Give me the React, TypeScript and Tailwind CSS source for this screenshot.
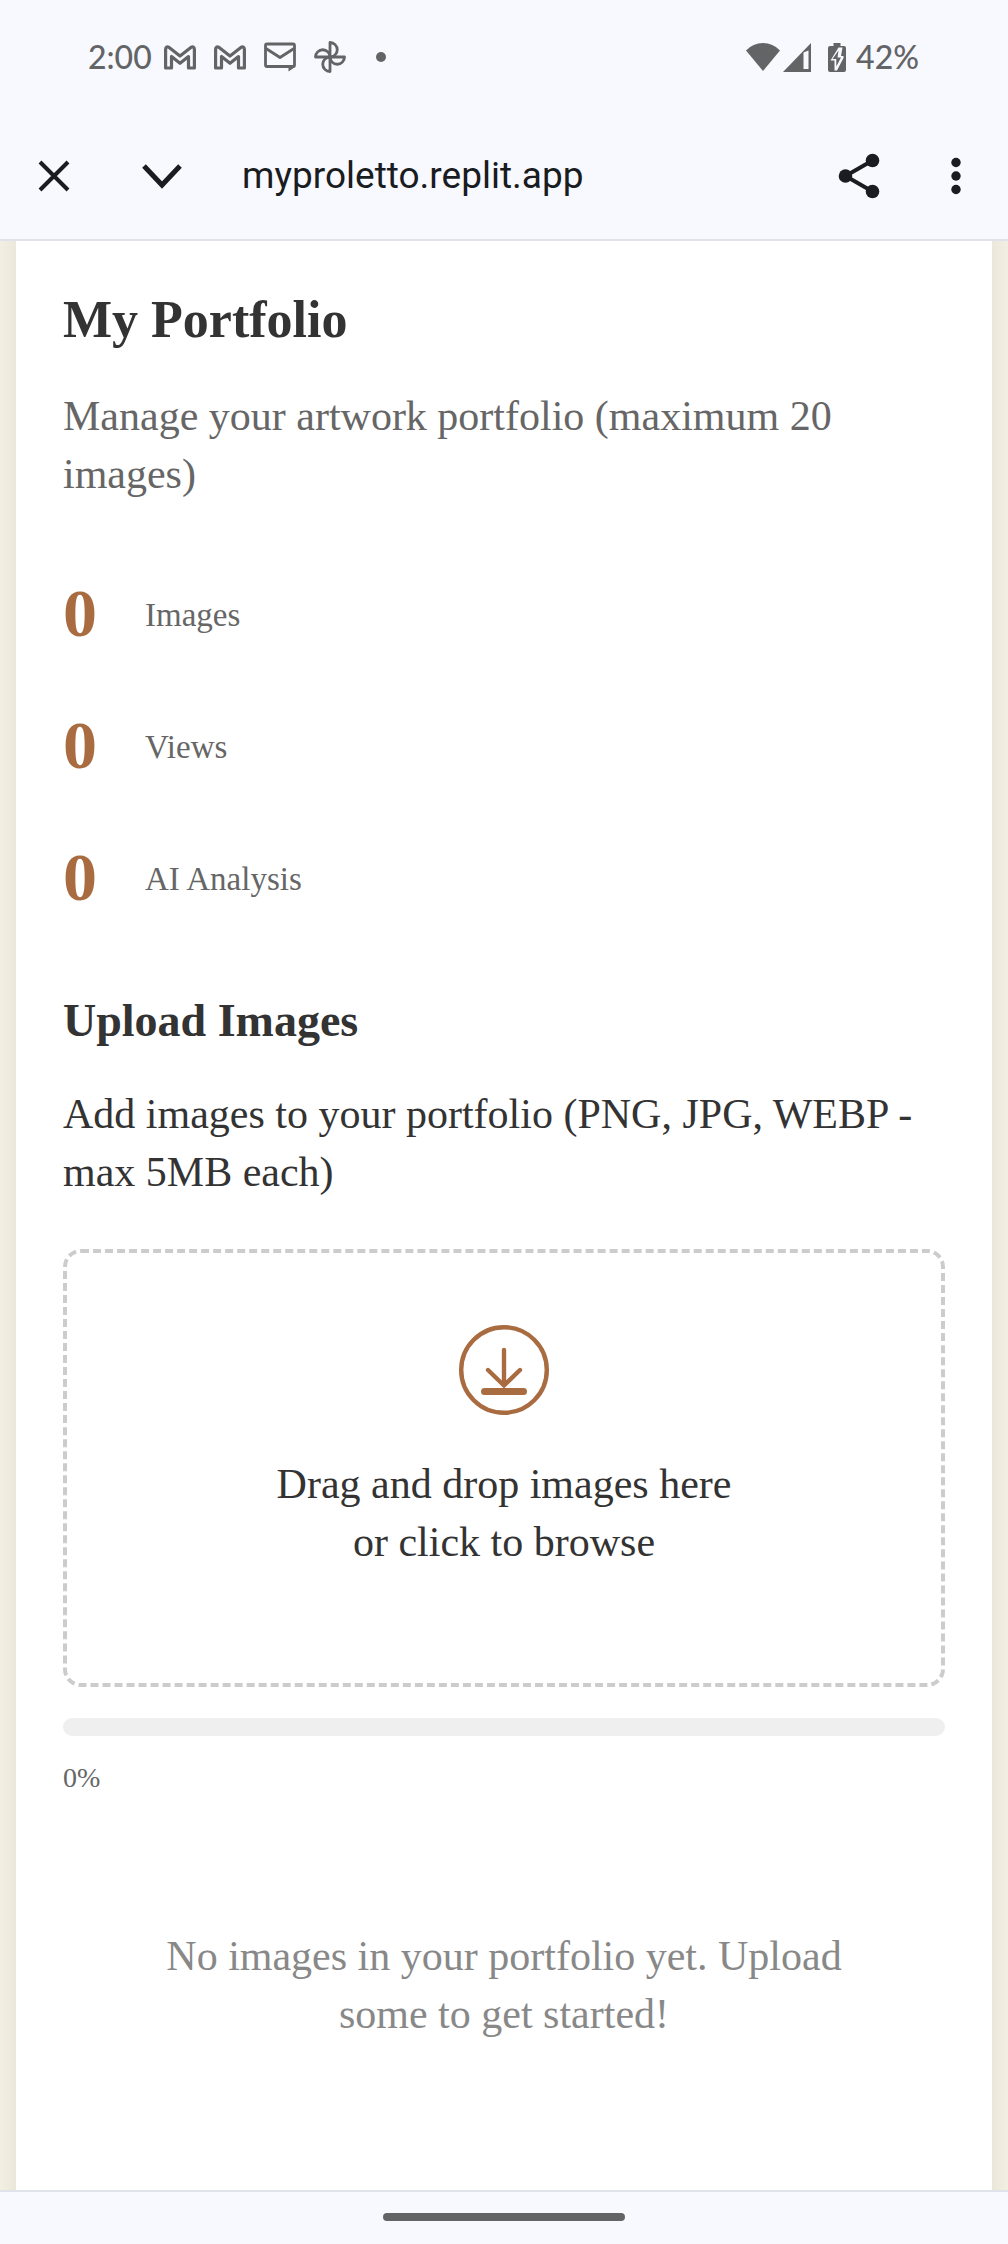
import type { ReactNode } from "react";

const stats = [
  { value: 0, label: "Images" },
  { value: 0, label: "Views" },
  { value: 0, label: "AI Analysis" },
];

function MailIcon() {
  return (
    <svg width="32" height="25" viewBox="0 0 32 25" fill="none" stroke="currentColor" strokeWidth="3.2" strokeLinejoin="round" aria-hidden="true">
      <path d="M1.6 23V4.5Q1.6 1 4.8 2.3L16 11L27.2 2.3Q30.4 1 30.4 4.5V23H24.5V11.5L16 18.3L7.5 11.5V23Z" />
    </svg>
  );
}

function EnvelopeIcon() {
  return (
    <svg width="32" height="30" viewBox="0 0 32 30" fill="none" stroke="currentColor" strokeWidth="2.8" strokeLinejoin="round" aria-hidden="true">
      <rect x="1.5" y="2" width="29" height="22.5" rx="1.5" />
      <path d="M2 6.5L16 15.5L30 6.5" />
      <path d="M24.5 25H31L24.5 29.5Z" fill="currentColor" stroke="none" />
    </svg>
  );
}

function PinwheelIcon() {
  return (
    <svg width="32" height="32" viewBox="0 0 32 32" fill="none" stroke="currentColor" strokeWidth="2.8" strokeLinejoin="round" aria-hidden="true">
      {[0, 90, 180, 270].map((angle) => (
        <path key={angle} d="M16 16V1.5A7.25 7.25 0 0 1 16 16" transform={`rotate(${angle} 16 16)`} />
      ))}
    </svg>
  );
}

function StatusBar() {
  return (
    <div className="flex h-[114px] items-center justify-between pr-[89px] pl-[88px] font-['Lato',sans-serif] text-[32px] leading-10 text-[#636466]">
      <div className="flex items-center gap-[18px]">
        <div className="flex items-center gap-3">
          <span className="font-medium">2:00</span>
          <MailIcon />
        </div>
        <MailIcon />
        <EnvelopeIcon />
        <PinwheelIcon />
        <span className="ml-3 size-[10px] rounded-full bg-current" />
      </div>
      <div className="flex items-center">
        <svg width="34" height="28" viewBox="0 0 34 28" fill="currentColor" aria-hidden="true">
          <path d="M0 7.5Q7 0 17 0T34 7.5L17 28Z" />
        </svg>
        <svg className="ml-[3px]" width="28" height="29" viewBox="0 0 28 29" fill="currentColor" aria-hidden="true">
          <path fillRule="evenodd" d="M28 0V29H0ZM20.5 9.5V26H25.5V7.5Z" />
        </svg>
        <svg className="ml-[17px]" width="18" height="29" viewBox="0 0 18 29" aria-hidden="true">
          <path fill="currentColor" d="M5.5 0H12.5V3H16Q18 3 18 5V27Q18 29 16 29H2Q0 29 0 27V5Q0 3 2 3H5.5Z" />
          <path fill="#f8f9ff" d="M10.5 4.5L2.5 17.5H6.5V27.5H9L15.5 15V13H13L14.5 4.5Z" />
          <path fill="currentColor" d="M10.5 7.5L4.5 16H8.3V23.5L13 14.5H9.5Z" />
        </svg>
        <span className="ml-[10px] font-medium">42%</span>
      </div>
    </div>
  );
}

function IconButton({ label, children }: { label: string; children: ReactNode }) {
  return (
    <button type="button" aria-label={label} className="flex size-12 items-center justify-center">
      {children}
    </button>
  );
}

function Toolbar() {
  return (
    <div className="flex h-[125px] items-center pr-7 pb-[2px] pl-[30px] text-[#191c20]">
      <IconButton label="Close">
        <svg width="32" height="32" viewBox="0 0 32 32" stroke="currentColor" strokeWidth="4" aria-hidden="true">
          <path d="M2 2L30 30M30 2L2 30" />
        </svg>
      </IconButton>
      <div className="ml-[60px] flex">
        <IconButton label="Minimize">
          <svg width="40" height="26" viewBox="0 0 40 26" fill="none" stroke="currentColor" strokeWidth="5" aria-hidden="true">
            <path d="M2 3L20 22L38 3" />
          </svg>
        </IconButton>
      </div>
      <span className="ml-14 flex-1 font-['Roboto',sans-serif] text-[37px] leading-10">myproletto.replit.app</span>
      <IconButton label="Share">
        <svg width="42" height="46" viewBox="0 0 42 46" fill="currentColor" stroke="currentColor" aria-hidden="true">
          <path d="M34.5 7.5L7.5 23L34.5 38.5" fill="none" strokeWidth="4" />
          <g stroke="none">
            <circle cx="34.5" cy="7.5" r="6.8" />
            <circle cx="7.5" cy="23" r="6.8" />
            <circle cx="34.5" cy="38.5" r="6.8" />
          </g>
        </svg>
      </IconButton>
      <div className="ml-[49px] flex">
        <IconButton label="More options">
          <svg width="10" height="38" viewBox="0 0 10 38" fill="currentColor" aria-hidden="true">
            <circle cx="5" cy="5.5" r="4.7" />
            <circle cx="5" cy="19" r="4.7" />
            <circle cx="5" cy="32.5" r="4.7" />
          </svg>
        </IconButton>
      </div>
    </div>
  );
}

function UploadIcon() {
  return (
    <svg width="90" height="90" viewBox="0 0 90 90" fill="none" stroke="#a96c40" strokeLinecap="round" aria-hidden="true">
      <circle cx="45" cy="45" r="42.8" strokeWidth="4.4" />
      <path d="M45 25V60M29 45L45 60.5L61 45" strokeWidth="4.4" />
      <path d="M25.5 66.5H64.5" strokeWidth="7" />
    </svg>
  );
}

export default function App() {
  return (
    <div className="flex min-h-screen flex-col bg-[#f8f9ff]">
      <header className="border-b-2 border-[#e0e3ea]">
        <StatusBar />
        <Toolbar />
      </header>

      <main className="flex flex-1 flex-col overflow-hidden bg-[#f9f5ea] px-4 font-['Liberation_Serif',serif] text-[#333333]">
        <div className="-my-16 flex-1 bg-white px-[47px] py-16 shadow-[0_0_40px_rgba(60,60,20,0.14)]">
          <h1 className="mt-12 text-[52px] leading-[62px] font-bold">My Portfolio</h1>
          <p className="mt-9 text-[42px] leading-[58px] text-[#666666]">Manage your artwork portfolio (maximum 20 images)</p>

          <dl className="mt-[60px] flex flex-col gap-8">
            {stats.map((stat) => (
              <div key={stat.label} className="flex flex-row-reverse items-center justify-end gap-12">
                <dt className="pt-1 text-[33px] leading-[50px] text-[#666666]">{stat.label}</dt>
                <dd className="text-[68px] leading-[100px] font-bold text-[#a96c40]">{stat.value}</dd>
              </div>
            ))}
          </dl>

          <section className="mt-[66px]">
            <h2 className="text-[46px] leading-[56px] font-bold">Upload Images</h2>
            <p className="mt-9 text-[42px] leading-[58px]">Add images to your portfolio (PNG, JPG, WEBP - max 5MB each)</p>

            <label className="mt-12 flex cursor-pointer flex-col items-center rounded-[18px] border-4 border-dashed border-[#cccccc] px-12 pt-[72px] pb-28 text-center">
              <UploadIcon />
              <span className="mt-10 text-[42px] leading-[58px]">
                Drag and drop images here
                <br />
                or click to browse
              </span>
              <input type="file" accept="image/png,image/jpeg,image/webp" multiple className="sr-only" />
            </label>

            <div role="progressbar" aria-label="Upload progress" aria-valuenow={0} aria-valuemin={0} aria-valuemax={100} className="mt-[31px] h-[18px] rounded-full bg-[#efefef]" />
            <p className="mt-5 text-[28px] leading-[44px] text-[#666666]">0%</p>
          </section>

          <p className="mt-[127px] px-24 text-center text-[42px] leading-[58px] text-[#888888]">No images in your portfolio yet. Upload some to get started!</p>
        </div>
      </main>

      <footer className="flex h-[54px] justify-center border-t-2 border-[#e0e3ea] pt-[21px]">
        <div className="h-2 w-[242px] rounded-full bg-[#636466]" />
      </footer>
    </div>
  );
}
